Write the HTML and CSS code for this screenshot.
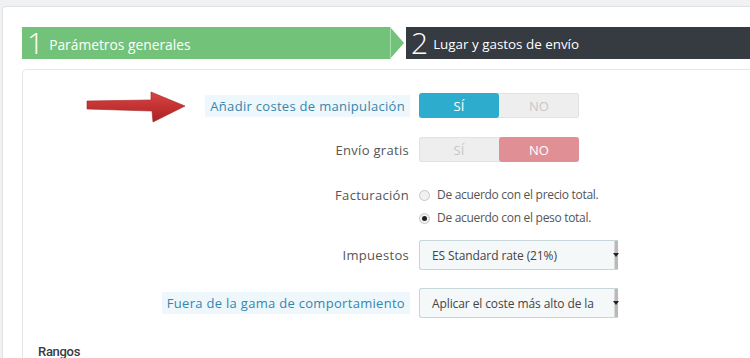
FILE: index.html
```html
<!DOCTYPE html>
<html lang="es">
<head>
	<meta charset="utf-8">
	<title>Transportista</title>
	<link rel="stylesheet" href="styles.css">
</head>
<body>
	<div class="page">
		<div class="steps">
			<div class="step done">
				<span class="num">1</span>
				<span class="step-title">Parámetros generales</span>
				<span class="tip"></span>
			</div>
			<div class="step current">
				<span class="num">2</span>
				<span class="step-title">Lugar y gastos de envío</span>
			</div>
		</div>

		<div class="panel">
			<svg class="red-arrow" width="104" height="34" viewBox="0 0 104 34">
				<defs>
					<linearGradient id="shade" x1="0" y1="0" x2="0" y2="1">
						<stop offset="0" stop-color="#d83a3a"/>
						<stop offset="1" stop-color="#a81616"/>
					</linearGradient>
				</defs>
				<path d="M2 10 L66 9 L66 1 L100 15 L68 31 L67 20 L2 18 Z" fill="url(#shade)" stroke="#9e1a1a" stroke-width="0.6" opacity="0.95"/>
			</svg>

			<div class="row">
				<label class="label"><span class="hint">Añadir costes de manipulación</span></label>
				<div class="control">
					<div class="switch">
						<span class="opt yes on">SÍ</span>
						<span class="opt">NO</span>
					</div>
				</div>
			</div>

			<div class="row">
				<label class="label"><span>Envío gratis</span></label>
				<div class="control">
					<div class="switch">
						<span class="opt">SÍ</span>
						<span class="opt no on">NO</span>
					</div>
				</div>
			</div>

			<div class="row top">
				<label class="label"><span>Facturación</span></label>
				<div class="control radios">
					<label class="radio"><span class="dot"></span>De acuerdo con el precio total.</label>
					<label class="radio"><span class="dot checked"></span>De acuerdo con el peso total.</label>
				</div>
			</div>

			<div class="row tax">
				<label class="label"><span>Impuestos</span></label>
				<div class="control">
					<div class="select">
						<span class="value">ES Standard rate (21%)</span>
						<span class="caret"></span>
					</div>
				</div>
			</div>

			<div class="row">
				<label class="label"><span class="hint">Fuera de la gama de comportamiento</span></label>
				<div class="control">
					<div class="select">
						<span class="value">Aplicar el coste más alto de la</span>
						<span class="caret"></span>
					</div>
				</div>
			</div>

			<h3 class="section">Rangos</h3>
		</div>
	</div>
</body>
</html>
```

FILE: styles.css
```css
body {
	margin: 0;
	padding: 0;
	background: #eff1f2;
	font-family: 'Open Sans', sans-serif;
	font-size: 13px;
	color: #555;
	overflow: hidden;
}

.page {
	margin: 6px 0 0 2px;
	border: 1px solid #dde1e4;
	border-right: none;
	border-radius: 4px 0 0 0;
	background: #fff;
	padding: 20px 0 40px 19px;
}

/* wizard steps */
.steps {
	display: flex;
	height: 32px;
}

.step {
	position: relative;
	display: flex;
	align-items: center;
	color: #fff;
}

.step.done {
	background: #72c279;
	width: 368px;
	margin-right: 16px;
}

.step.current {
	background: #363a41;
	flex: 1;
}

.tip {
	position: absolute;
	right: -14px;
	top: 0;
	width: 0;
	height: 0;
	border-top: 16px solid transparent;
	border-bottom: 16px solid transparent;
	border-left: 14px solid #72c279;
}

.tip::before {
	content: "";
	position: absolute;
	left: -14px;
	top: -16px;
	width: 1px;
	height: 32px;
	background: #a9dcae;
}

.num {
	font-size: 30px;
	font-weight: 300;
	line-height: 32px;
	padding: 0 5px 0 5px;
}

.step-title {
	font-size: 13.8px;
	padding-top: 2px;
}

.current .step-title {
	font-size: 13.4px;
}

/* form panel */
.panel {
	position: relative;
	margin-top: 10px;
	border: 1px solid #e6e6e6;
	border-right: none;
	border-radius: 5px 0 0 5px;
	padding: 23px 0 0 0;
	height: 400px;
}

.red-arrow {
	position: absolute;
	left: 62px;
	top: 21px;
}

.row {
	display: flex;
	align-items: center;
	margin-bottom: 19px;
}

.row.top {
	align-items: flex-start;
	padding-top: 5px;
	margin-bottom: 13px;
}

.row.tax {
	margin-bottom: 18px;
}

.label {
	width: 387px;
	display: flex;
	justify-content: flex-end;
	text-align: right;
	letter-spacing: 0.3px;
	color: #555;
	flex-shrink: 0;
}

.label span {
	padding-right: 1px;
}

.label .hint {
	color: #3586ae;
	background: #eef7fb;
	padding: 2px 5px;
}

.control {
	margin-left: 9px;
}

/* yes/no switch */
.switch {
	display: flex;
	width: 160px;
	height: 25px;
	border-radius: 3px;
	background: #eee;
	box-shadow: inset 0 0 0 1px #e2e2e2;
}

.opt {
	flex: 1;
	display: flex;
	align-items: center;
	justify-content: center;
	color: #c7c7c7;
	border-radius: 3px;
}

.opt.on {
	color: #fff;
}

.opt.yes {
	background: #2eacce;
}

.opt.no {
	background: #e08f95;
}

/* radios */
.radios {
	display: flex;
	flex-direction: column;
	gap: 5px;
	margin-left: 9px;
	font-size: 12px;
	letter-spacing: -0.3px;
	color: #555;
}

.radio {
	display: flex;
	align-items: center;
	line-height: 18px;
}

.dot {
	width: 9px;
	height: 9px;
	border: 1px solid #c8c8c8;
	border-radius: 50%;
	background: #f1f1f1;
	margin-right: 7px;
	position: relative;
}

.dot.checked::after {
	content: "";
	position: absolute;
	left: 2px;
	top: 2px;
	width: 5px;
	height: 5px;
	border-radius: 50%;
	background: #222;
}

/* selects */
.select {
	display: flex;
	align-items: center;
	justify-content: space-between;
	width: 198px;
	height: 28px;
	border: 1px solid #c7d6db;
	border-right: none;
	border-radius: 3px 0 0 3px;
	background: #f5f8f9;
	color: #444;
	font-size: 12px;
	letter-spacing: -0.1px;
}

.value {
	padding-left: 12px;
	white-space: nowrap;
	overflow: hidden;
}

.caret {
	position: relative;
	width: 3px;
	height: 28px;
	background: #b9b9b9;
	border-left: 1px solid #d8d8d8;
}

.caret::after {
	content: "";
	position: absolute;
	left: -2px;
	top: 12px;
	border-left: 3px solid transparent;
	border-right: 3px solid transparent;
	border-top: 4px solid #222;
}

.section {
	margin: 25px 0 0 15px;
	font-family: Roboto, sans-serif;
	font-size: 13px;
	font-weight: 500;
	line-height: 18px;
	color: #363a41;
	letter-spacing: -0.3px;
}
```
